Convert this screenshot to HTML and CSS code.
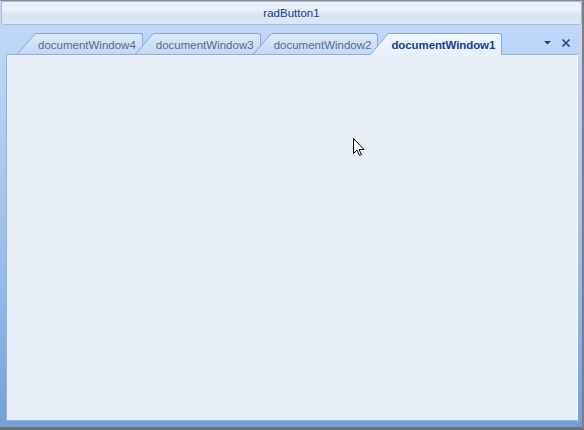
FILE: index.html
```html
<!DOCTYPE html>
<html lang="en">
<head>
    <meta charset="UTF-8">
    <title>radButton1 - Dock</title>
    <link rel="stylesheet" href="styles.css">
</head>
<body>
    <svg class="defs" width="0" height="0">
        <defs>
            <linearGradient id="tabFill" x1="0" y1="0" x2="0" y2="1">
                <stop offset="0" stop-color="#dbe8f9"/>
                <stop offset="1" stop-color="#c3d8f4"/>
            </linearGradient>
            <linearGradient id="tabFillActive" x1="0" y1="0" x2="0" y2="1">
                <stop offset="0" stop-color="#f1f6fd"/>
                <stop offset="1" stop-color="#e8f0fa"/>
            </linearGradient>
        </defs>
    </svg>
    <div class="window">
        <div class="rad-button">radButton1</div>

        <div class="tab-strip">
            <div class="tab">
                <svg class="tab-slant" width="19" height="21" viewBox="0 0 19 21">
                    <polygon points="0,21 18,1 19,0.5 19,21" fill="url(#tabFill)"/>
                    <path d="M0.5 21 L17 2 Q18 0.5 19 0.5" fill="none" stroke="#86a9d8"/>
                </svg>
                <span class="tab-body">documentWindow4</span>
            </div>
            <div class="tab">
                <svg class="tab-slant" width="19" height="21" viewBox="0 0 19 21">
                    <polygon points="0,21 18,1 19,0.5 19,21" fill="url(#tabFill)"/>
                    <path d="M0.5 21 L17 2 Q18 0.5 19 0.5" fill="none" stroke="#86a9d8"/>
                </svg>
                <span class="tab-body">documentWindow3</span>
            </div>
            <div class="tab">
                <svg class="tab-slant" width="19" height="21" viewBox="0 0 19 21">
                    <polygon points="0,21 18,1 19,0.5 19,21" fill="url(#tabFill)"/>
                    <path d="M0.5 21 L17 2 Q18 0.5 19 0.5" fill="none" stroke="#86a9d8"/>
                </svg>
                <span class="tab-body">documentWindow2</span>
            </div>
            <div class="tab active">
                <svg class="tab-slant" width="19" height="22" viewBox="0 0 19 22">
                    <polygon points="0,22 18,1 19,0.5 19,22" fill="url(#tabFillActive)"/>
                    <path d="M0.5 21.5 L17 2 Q18 0.5 19 0.5" fill="none" stroke="#86a9d8"/>
                </svg>
                <span class="tab-body">documentWindow1</span>
            </div>

            <div class="strip-buttons">
                <svg class="strip-icon" width="9" height="9" viewBox="0 0 9 9">
                    <polygon points="1,3 8,3 4.5,6.5" fill="#15428b"/>
                </svg>
                <svg class="strip-icon" width="10" height="10" viewBox="0 0 10 10">
                    <path d="M1.5 1.5 L8.5 8.5 M8.5 1.5 L1.5 8.5" stroke="#15428b" stroke-width="1.5"/>
                </svg>
            </div>
        </div>

        <div class="document-panel"></div>

        <svg class="cursor" width="12" height="19" viewBox="0 0 12 19">
            <path d="M0.5 0.5 L0.5 15.5 L4 12 L6.5 17.5 L8.5 16.5 L6 11.5 L11 11.5 Z" fill="#ffffff" stroke="#000000" stroke-linejoin="round"/>
        </svg>
    </div>
</body>
</html>
```

FILE: styles.css
```css
body {
    margin: 0;
    width: 584px;
    height: 430px;
    overflow: hidden;
    font-family: "Liberation Sans", Arial, sans-serif;
    font-size: 11.5px;
}
.defs {
    position: absolute;
}
.window {
    position: relative;
    box-sizing: border-box;
    height: 430px;
    display: flex;
    flex-direction: column;
    border-top: 1px solid #8c8c8c;
    border-right: 2px solid #7d7f83;
    border-bottom: 3px solid #6e7072;
    background: linear-gradient(#c3d9f8, #b3cdf2 30%, #94b7e6 70%, #739fd6);
}
.rad-button {
    height: 24px;
    box-sizing: border-box;
    margin-left: 1px;
    border: 1px solid #a9bcd7;
    border-radius: 3px;
    background: linear-gradient(#eef4fc, #e6eefa 45%, #d8e4f4 55%, #dde7f5);
    color: #15428b;
    display: flex;
    align-items: center;
    justify-content: center;
}
.tab-strip {
    margin-top: 8px;
    height: 21px;
    padding-left: 17px;
    padding-right: 11px;
    display: flex;
    align-items: flex-start;
    position: relative;
    z-index: 1;
}
.tab {
    display: flex;
    height: 21px;
    margin-left: -8px;
    position: relative;
}
.tab:first-child {
    margin-left: 0;
}
.tab-slant {
    display: block;
    flex: none;
}
.tab-body {
    box-sizing: border-box;
    height: 21px;
    padding: 1px 6px 0 2px;
    border-top: 1px solid #86a9d8;
    border-right: 1px solid #86a9d8;
    border-top-right-radius: 3px;
    background: linear-gradient(#dbe8f9, #c3d8f4);
    color: #5a6d88;
    display: flex;
    align-items: center;
}
.tab.active {
    height: 22px;
}
.tab.active .tab-body {
    height: 22px;
    background: linear-gradient(#f1f6fd, #e8f0fa);
    color: #15428b;
    font-weight: bold;
    letter-spacing: -0.1px;
    padding-bottom: 1px;
}
.strip-buttons {
    margin-left: auto;
    display: flex;
    align-items: center;
    gap: 9px;
    height: 19px;
}
.strip-icon {
    display: block;
}
.document-panel {
    flex: 1;
    margin: 0 4px 6px 6px;
    border: 1px solid #8fb1dd;
    border-right-color: #f4f8fd;
    background: #e8eff9;
}
.cursor {
    position: absolute;
    left: 353px;
    top: 137px;
}
```
